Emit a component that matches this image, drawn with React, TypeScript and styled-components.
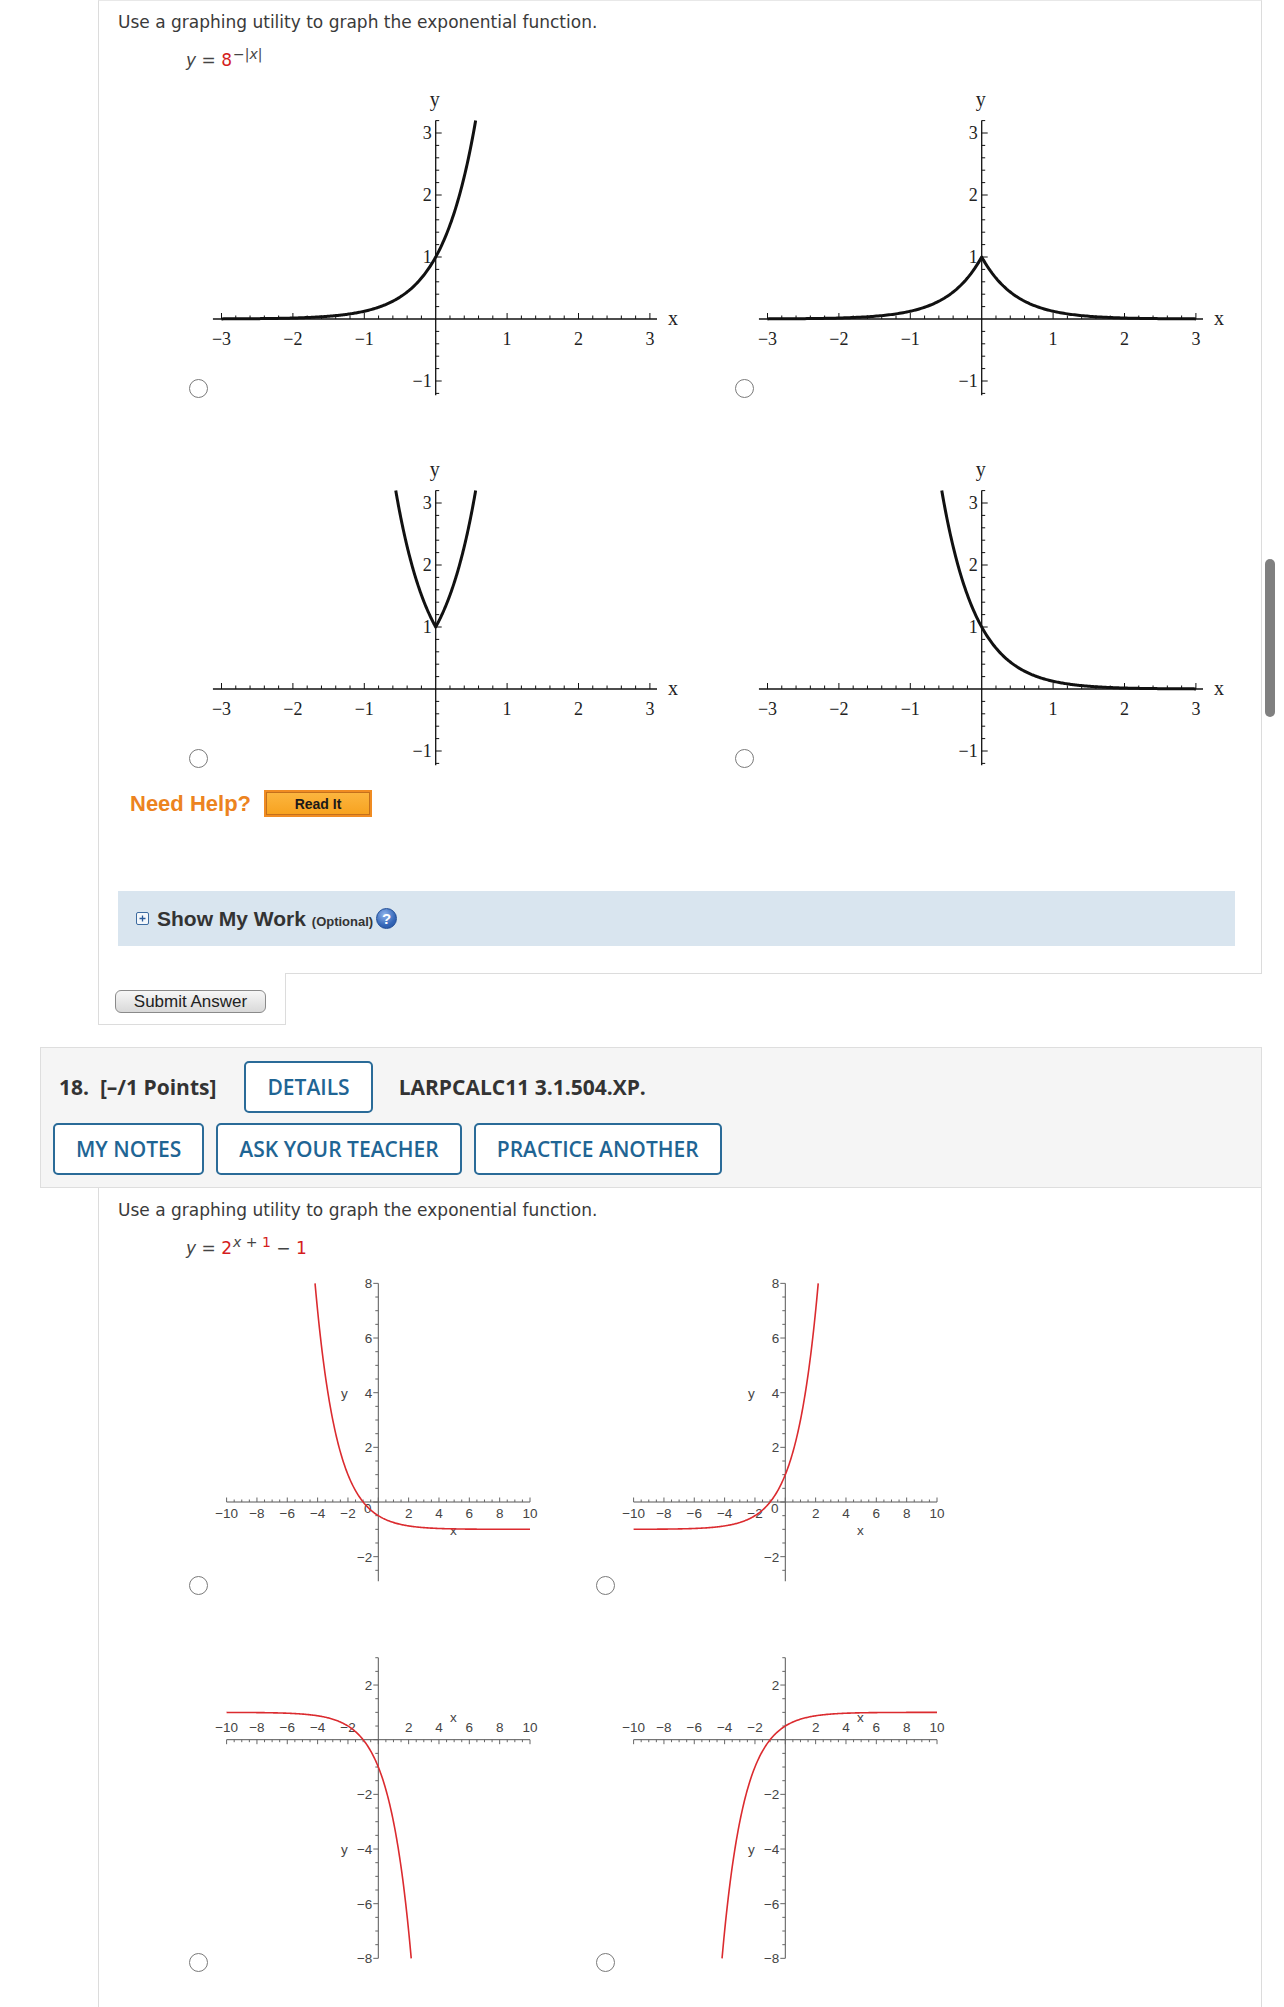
import React from 'react'
import styled, { createGlobalStyle } from 'styled-components'

const GlobalStyle = createGlobalStyle`
  html, body {
    margin: 0;
    padding: 0;
    background: #fff;
  }
  body {
    font-family: 'DejaVu Sans', Verdana, sans-serif;
    color: #3a3a3a;
  }
`

const Page = styled.div`
  position: relative;
  width: 1284px;
  min-height: 2007px;
  overflow: hidden;
`

const ScrollThumb = styled.div`
  position: absolute;
  left: 1265px;
  top: 559px;
  width: 10px;
  height: 158px;
  border-radius: 5px;
  background: #808080;
`

const QuestionCard = styled.div<{ $first?: boolean }>`
  margin-left: 98px;
  width: 1164px;
  box-sizing: border-box;
  border-left: 1px solid #dcdcdc;
  border-right: 1px solid #dcdcdc;
  border-top: ${({ $first }) => ($first ? '1px solid #e8e8e8' : 'none')};
  border-bottom: ${({ $first }) => ($first ? '1px solid #dcdcdc' : 'none')};
  padding: ${({ $first }) => ($first ? '10px 26px 27px 19px' : '11px 26px 60px 19px')};
`

const Prompt = styled.div`
  font-size: 17px;
  line-height: 22px;
  color: #3a3a3a;
`

const Formula = styled.div`
  margin: 15px 0 0 68px;
  font-size: 17px;
  line-height: 24px;
  height: 24px;
  color: #444;
  white-space: nowrap;
`

const Red = styled.span`
  color: #d41d1d;
`

const Sup = styled.span`
  font-size: 14px;
  position: relative;
  top: -7px;
  margin-left: 1px;
`

const Choices = styled.div<{ $col: number; $gap: number; $mt: number }>`
  display: grid;
  grid-template-columns: ${({ $col }) => `${$col}px ${$col}px`};
  row-gap: ${({ $gap }) => $gap}px;
  margin: ${({ $mt }) => $mt}px 0 0 71px;
`

const Choice = styled.label`
  display: flex;
  align-items: flex-end;
`

const Radio = styled.span<{ $lift: number }>`
  flex: none;
  width: 19px;
  height: 19px;
  box-sizing: border-box;
  border: 1.5px solid #7a7a7a;
  border-radius: 50%;
  background: #fff;
  margin: 0 2px ${({ $lift }) => $lift}px 0;
`

const MathPlot = styled.svg`
  flex: none;
  display: block;
  overflow: visible;
  text {
    font-family: 'Liberation Serif', 'Times New Roman', serif;
    fill: #222;
  }
`

const MaplePlot = styled.svg`
  flex: none;
  display: block;
  overflow: visible;
  text {
    font-family: 'Liberation Sans', Arial, sans-serif;
    font-size: 13.5px;
    fill: #444;
  }
`

const HelpRow = styled.div`
  display: flex;
  align-items: center;
  gap: 13px;
  margin: 20px 0 0 12px;
`

const HelpLabel = styled.span`
  font-family: 'Liberation Sans', Arial, sans-serif;
  font-weight: bold;
  font-size: 22px;
  color: #ec8320;
`

const ReadIt = styled.button`
  width: 108px;
  height: 27px;
  box-sizing: border-box;
  border: 2px solid #f08c22;
  box-shadow: inset 0 0 0 1px #c4701c;
  background: linear-gradient(#fcb640, #f7a21f);
  font-family: 'Liberation Sans', Arial, sans-serif;
  font-weight: bold;
  font-size: 14px;
  color: #1a1a1a;
  padding: 0;
`

const WorkBar = styled.div`
  margin-top: 74px;
  height: 55px;
  background: #d9e5ef;
  display: flex;
  align-items: center;
  padding-left: 18px;
  font-family: 'Liberation Sans', Arial, sans-serif;
`

const WorkTitle = styled.span`
  margin-left: 8px;
  font-weight: bold;
  font-size: 21px;
  color: #333;
`

const WorkNote = styled.span`
  font-size: 13px;
`

const HelpIcon = styled.span`
  margin-left: 3px;
  width: 21px;
  height: 21px;
  box-sizing: border-box;
  border-radius: 50%;
  border: 1px solid #1f4c96;
  background: radial-gradient(circle at 40% 30%, #8fb4ec, #3567b8 60%, #224f9c);
  color: #fff;
  font-weight: bold;
  font-size: 15px;
  line-height: 19px;
  text-align: center;
`

const SubmitTab = styled.div`
  position: relative;
  margin: -1px 0 0 98px;
  width: 188px;
  box-sizing: border-box;
  background: #fff;
  border: 1px solid #dcdcdc;
  border-top: none;
  padding: 17px 0 11px 16px;
`

const SubmitButton = styled.button`
  display: block;
  width: 151px;
  height: 23px;
  box-sizing: border-box;
  border: 1px solid #8a8a8a;
  border-radius: 6px;
  background: linear-gradient(#f7f7f7, #d9d9d9);
  font-family: 'Liberation Sans', Arial, sans-serif;
  font-size: 17px;
  line-height: 20px;
  color: #222;
  padding: 0;
`

const Header = styled.div`
  margin: 22px 0 0 40px;
  width: 1222px;
  box-sizing: border-box;
  background: #f5f5f5;
  border: 1px solid #dedede;
  padding: 13px 12px 12px;
  font-family: 'Open Sans', 'Noto Sans', sans-serif;
  display: flex;
  flex-direction: column;
  gap: 10px;
`

const HeaderRow = styled.div`
  display: flex;
  align-items: center;
  gap: 12px;
`

const HeaderText = styled.span<{ $ml?: number; $mr?: number }>`
  font-weight: 700;
  font-size: 21px;
  color: #333;
  margin: 0 ${({ $mr }) => $mr ?? 0}px 0 ${({ $ml }) => $ml ?? 0}px;
  white-space: pre;
`

const ToolButton = styled.button`
  height: 52px;
  box-sizing: border-box;
  padding: 0 21px;
  border: 2px solid #2a6b98;
  border-radius: 5px;
  background: #fff;
  color: #1f6594;
  font-family: 'Open Sans', 'Noto Sans', sans-serif;
  font-weight: 600;
  font-size: 21px;
`

/* ---------- plots ---------- */

const range = (a: number, b: number, step: number) => {
  const out: number[] = []
  const n = Math.round((b - a) / step)
  for (let i = 0; i <= n; i++) out.push(+(a + i * step).toFixed(4))
  return out
}

const curve = (
  fn: (x: number) => number,
  x0: number,
  x1: number,
  sx: (x: number) => number,
  sy: (y: number) => number,
  n = 240
) => {
  const pts: string[] = []
  for (let i = 0; i <= n; i++) {
    const x = x0 + ((x1 - x0) * i) / n
    pts.push(`${sx(x).toFixed(2)},${sy(fn(x)).toFixed(2)}`)
  }
  return 'M' + pts.join('L')
}

const minus = (v: number) => (v < 0 ? `\u2212${Math.abs(v)}` : `${v}`)

type MathKind = 'right' | 'peak' | 'v' | 'left'
const LIM = Math.log(3.2) / Math.log(8)
const mathFns: Record<MathKind, { f: (x: number) => number; from: number; to: number }> = {
  right: { f: (x) => 8 ** x, from: -3, to: LIM },
  peak: { f: (x) => 8 ** -Math.abs(x), from: -3, to: 3 },
  v: { f: (x) => 8 ** Math.abs(x), from: -LIM, to: LIM },
  left: { f: (x) => 8 ** -x, from: -LIM, to: 3 },
}

function MathGraph({ kind }: { kind: MathKind }) {
  const ox = 225.7
  const oy = 229
  const ux = 71.4
  const uy = 62
  const sx = (x: number) => ox + x * ux
  const sy = (y: number) => oy - y * uy
  const { f, from, to } = mathFns[kind]
  return (
    <MathPlot width={475} height={310}>
      <line x1={sx(-3.12)} y1={oy} x2={sx(3.1)} y2={oy} stroke="#111" strokeWidth={1.3} />
      <line x1={ox} y1={sy(3.2)} x2={ox} y2={sy(-1.23)} stroke="#111" strokeWidth={1.3} />
      {range(-3, 3, 0.2)
        .filter((v) => Math.abs(v) > 0.01)
        .map((v) => {
          const major = Math.abs(v - Math.round(v)) < 0.01
          return <line key={`x${v}`} x1={sx(v)} x2={sx(v)} y1={oy} y2={oy - (major ? 6 : 3.5)} stroke="#111" strokeWidth={1} />
        })}
      {range(-1.2, 3.2, 0.2)
        .filter((v) => Math.abs(v) > 0.01)
        .map((v) => {
          const major = Math.abs(v - Math.round(v)) < 0.01
          return <line key={`y${v}`} x1={ox} x2={ox + (major ? 6 : 3.5)} y1={sy(v)} y2={sy(v)} stroke="#111" strokeWidth={1} />
        })}
      {[-3, -2, -1, 1, 2, 3].map((v) => (
        <text key={`lx${v}`} x={sx(v)} y={oy + 26} fontSize={18} textAnchor="middle">
          {minus(v)}
        </text>
      ))}
      {[3, 2, 1, -1].map((v) => (
        <text key={`ly${v}`} x={ox - 4} y={sy(v) + 6} fontSize={18} textAnchor="end">
          {minus(v)}
        </text>
      ))}
      <text x={ox - 1} y={16} fontSize={20} textAnchor="middle">
        y
      </text>
      <text x={463} y={oy + 6} fontSize={20} textAnchor="middle">
        x
      </text>
      <path d={curve(f, from, to, sx, sy)} fill="none" stroke="#111" strokeWidth={3} strokeLinejoin="round" />
    </MathPlot>
  )
}

type MapleKind = 'A' | 'B' | 'C' | 'D'
const EDGE = Math.log2(9) - 1
const mapleFns: Record<MapleKind, { f: (x: number) => number; from: number; to: number }> = {
  A: { f: (x) => 2 ** (-x - 1) - 1, from: -EDGE - 2, to: 10 },
  B: { f: (x) => 2 ** (x + 1) - 1, from: -10, to: EDGE },
  C: { f: (x) => 1 - 2 ** (x + 1), from: -10, to: EDGE },
  D: { f: (x) => 1 - 2 ** (-x - 1), from: -EDGE - 2, to: 10 },
}

function MapleGraph({ kind }: { kind: MapleKind }) {
  const flipped = kind === 'C' || kind === 'D'
  const ox = 168.3
  const oy = flipped ? 89.7 : 229
  const ux = 15.17
  const uy = 27.33
  const sx = (x: number) => ox + x * ux
  const sy = (y: number) => oy - y * uy
  const yTop = flipped ? 3 : 8
  const yBottom = flipped ? -8 : -2.9
  const yLabels = flipped ? [2, -2, -4, -6, -8] : [8, 6, 4, 2, -2]
  const tickDir = flipped ? 1 : -1
  const { f, from, to } = mapleFns[kind]
  return (
    <MaplePlot width={340} height={322}>
      <line x1={sx(-10)} y1={oy} x2={sx(10)} y2={oy} stroke="#555" strokeWidth={1} />
      <line x1={ox} y1={sy(yTop)} x2={ox} y2={sy(yBottom)} stroke="#555" strokeWidth={1} />
      {range(-10, 10, 0.5).map((v) => {
        const major = Math.abs(v / 2 - Math.round(v / 2)) < 0.01
        return <line key={`x${v}`} x1={sx(v)} x2={sx(v)} y1={oy} y2={oy + tickDir * (major ? 4.5 : 2.5)} stroke="#666" strokeWidth={1} />
      })}
      {range(Math.ceil(yBottom * 2) / 2, yTop, 0.5).map((v) => {
        const major = Math.abs(v / 2 - Math.round(v / 2)) < 0.01
        return <line key={`y${v}`} x1={ox - (major ? 5 : 3)} x2={ox} y1={sy(v)} y2={sy(v)} stroke="#666" strokeWidth={1} />
      })}
      {range(-10, 10, 2)
        .filter((v) => v !== 0)
        .map((v) => (
          <text key={`lx${v}`} x={sx(v)} y={flipped ? oy - 7.5 : oy + 16} textAnchor="middle">
            {minus(v)}
          </text>
        ))}
      {!flipped && (
        <text x={ox - 10.6} y={oy + 11} textAnchor="middle">
          0
        </text>
      )}
      {yLabels.map((v) => (
        <text key={`ly${v}`} x={ox - 6} y={sy(v) + 5} textAnchor="end">
          {minus(v)}
        </text>
      ))}
      <text x={ox + 75} y={flipped ? oy - 18 : oy + 33} textAnchor="middle">
        x
      </text>
      <text x={ox - 34} y={sy(flipped ? -4 : 4) + 5} textAnchor="middle">
        y
      </text>
      <path d={curve(f, from, to, sx, sy)} fill="none" stroke="#db2b2f" strokeWidth={1.6} />
    </MaplePlot>
  )
}

function PlusBox() {
  return (
    <svg width="13" height="13" viewBox="0 0 13 13">
      <rect x="0.5" y="0.5" width="12" height="12" rx="1.5" fill="#f3f7fb" stroke="#3d6ba0" />
      <path d="M3.5 6.5h6M6.5 3.5v6" stroke="#2a5a9a" strokeWidth="1.3" />
    </svg>
  )
}

export default function App() {
  return (
    <Page>
      <GlobalStyle />
      <QuestionCard $first>
        <Prompt>Use a graphing utility to graph the exponential function.</Prompt>
        <Formula>
          <i>y</i> = <Red>8</Red>
          <Sup>−|<i>x</i>|</Sup>
        </Formula>
        <Choices $col={546} $gap={60} $mt={18}>
          {(['right', 'peak', 'v', 'left'] as MathKind[]).map((k) => (
            <Choice key={k}>
              <Radio $lift={2.5} />
              <MathGraph kind={k} />
            </Choice>
          ))}
        </Choices>
        <HelpRow>
          <HelpLabel>Need Help?</HelpLabel>
          <ReadIt>Read It</ReadIt>
        </HelpRow>
        <WorkBar>
          <PlusBox />
          <WorkTitle>
            Show My Work <WorkNote>(Optional)</WorkNote>
          </WorkTitle>
          <HelpIcon>?</HelpIcon>
        </WorkBar>
      </QuestionCard>
      <SubmitTab>
        <SubmitButton>Submit Answer</SubmitButton>
      </SubmitTab>

      <Header>
        <HeaderRow>
          <HeaderText $ml={6} $mr={16}>
            18.  [–/1 Points]
          </HeaderText>
          <ToolButton>DETAILS</ToolButton>
          <HeaderText $ml={14}>LARPCALC11 3.1.504.XP.</HeaderText>
        </HeaderRow>
        <HeaderRow>
          <ToolButton>MY NOTES</ToolButton>
          <ToolButton>ASK YOUR TEACHER</ToolButton>
          <ToolButton>PRACTICE ANOTHER</ToolButton>
        </HeaderRow>
      </Header>
      <QuestionCard>
        <Prompt>Use a graphing utility to graph the exponential function.</Prompt>
        <Formula>
          <i>y</i> = <Red>2</Red>
          <Sup>
            <i>x</i> + <Red>1</Red>
          </Sup>{' '}
          − <Red>1</Red>
        </Formula>
        <Choices $col={407} $gap={55} $mt={13}>
          {(['A', 'B', 'C', 'D'] as MapleKind[]).map((k) => (
            <Choice key={k}>
              <Radio $lift={0.5} />
              <MapleGraph kind={k} />
            </Choice>
          ))}
        </Choices>
      </QuestionCard>
      <ScrollThumb />
    </Page>
  )
}
